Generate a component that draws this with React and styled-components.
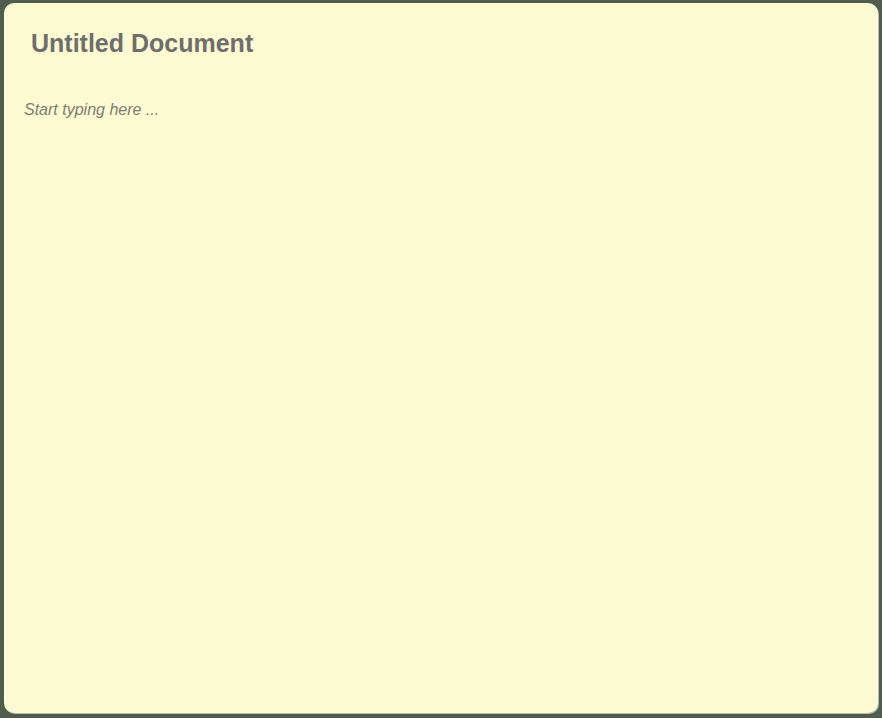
import styled, { createGlobalStyle } from 'styled-components'

const GlobalStyle = createGlobalStyle`
  html, body {
    margin: 0;
    padding: 0;
    height: 100%;
    background: #4f5d4f;
  }
  #root {
    height: 100%;
  }
`

const Page = styled.div`
  box-sizing: border-box;
  height: 718px;
  padding: 3px 4px 5px 4px;
  display: flex;
`

const Sheet = styled.div`
  flex: 1;
  background: #fcfad1;
  border-radius: 10px;
  box-shadow: 1px 1px 0 #b9bcb6;
  display: flex;
  flex-direction: column;
  padding: 25px 20px 0 20px;
`

const Title = styled.h1`
  margin: 0 0 0 7px;
  font-family: 'Liberation Sans', Arial, sans-serif;
  font-weight: bold;
  font-size: 25px;
  line-height: 30px;
  color: #6e6e6e;
`

const Body = styled.div`
  margin-top: 42px;
  font-family: 'Liberation Sans', Arial, sans-serif;
  font-style: italic;
  font-size: 16px;
  line-height: 20px;
  color: #7d7d74;
`

export default function App() {
  return (
    <>
      <GlobalStyle />
      <Page>
        <Sheet>
          <Title>Untitled Document</Title>
          <Body>Start typing here ...</Body>
        </Sheet>
      </Page>
    </>
  )
}
